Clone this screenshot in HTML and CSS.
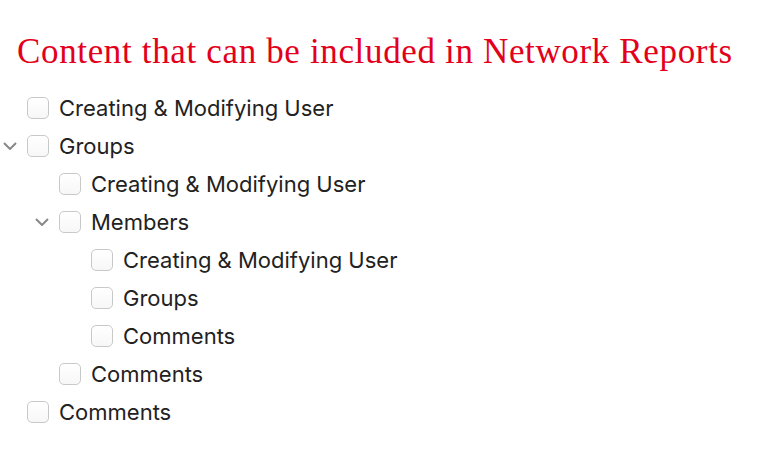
FILE: index.html
```html
<!DOCTYPE html>
<html>
	<head>
		<meta charset="UTF-8">
		<title>Network Reports</title>
		<link rel="stylesheet" href="styles.css">
	</head>
	<body>
		<h1 class="title">Content that can be included in Network Reports</h1>
		<ul class="tree">
			<li class="row lv0"><span class="toggle"></span><span class="box"></span><span class="label">Creating &amp; Modifying User</span></li>
			<li class="row lv0"><span class="toggle open"><svg width="14" height="8" viewBox="0 0 14 8"><path d="M1 1l6 6 6-6" fill="none" stroke="#888" stroke-width="2"/></svg></span><span class="box"></span><span class="label">Groups</span></li>
			<li class="row lv1"><span class="toggle"></span><span class="box"></span><span class="label">Creating &amp; Modifying User</span></li>
			<li class="row lv1"><span class="toggle open"><svg width="14" height="8" viewBox="0 0 14 8"><path d="M1 1l6 6 6-6" fill="none" stroke="#888" stroke-width="2"/></svg></span><span class="box"></span><span class="label">Members</span></li>
			<li class="row lv2"><span class="toggle"></span><span class="box"></span><span class="label">Creating &amp; Modifying User</span></li>
			<li class="row lv2"><span class="toggle"></span><span class="box"></span><span class="label">Groups</span></li>
			<li class="row lv2"><span class="toggle"></span><span class="box"></span><span class="label">Comments</span></li>
			<li class="row lv1"><span class="toggle"></span><span class="box"></span><span class="label">Comments</span></li>
			<li class="row lv0"><span class="toggle"></span><span class="box"></span><span class="label">Comments</span></li>
		</ul>
	</body>
</html>
```

FILE: styles.css
```css
body {
	margin: 0;
	background: #fff;
}
.title {
	margin: 0;
	padding: 32px 0 0 17px;
	height: 59px;
	box-sizing: border-box;
	font-family: "Liberation Serif", serif;
	font-weight: normal;
	font-size: 35px;
	letter-spacing: 0.65px;
	line-height: 40px;
	color: #e3001b;
	white-space: nowrap;
}
.tree {
	list-style: none;
	margin: 0;
	padding: 30px 0 0;
}
.row {
	display: flex;
	align-items: center;
	height: 38px;
	font-family: Inter, sans-serif;
	font-size: 22px;
	color: #222;
}
.lv1 { padding-left: 32px; }
.lv2 { padding-left: 64px; }
.toggle {
	display: flex;
	align-items: center;
	width: 24px;
	padding-left: 3px;
	height: 22px;
}
.box {
	width: 22px;
	height: 22px;
	box-sizing: border-box;
	border: 1px solid #c9c9c9;
	border-radius: 5px;
	background: linear-gradient(#fff, #f7f7f7);
	margin-right: 10px;
}
```
